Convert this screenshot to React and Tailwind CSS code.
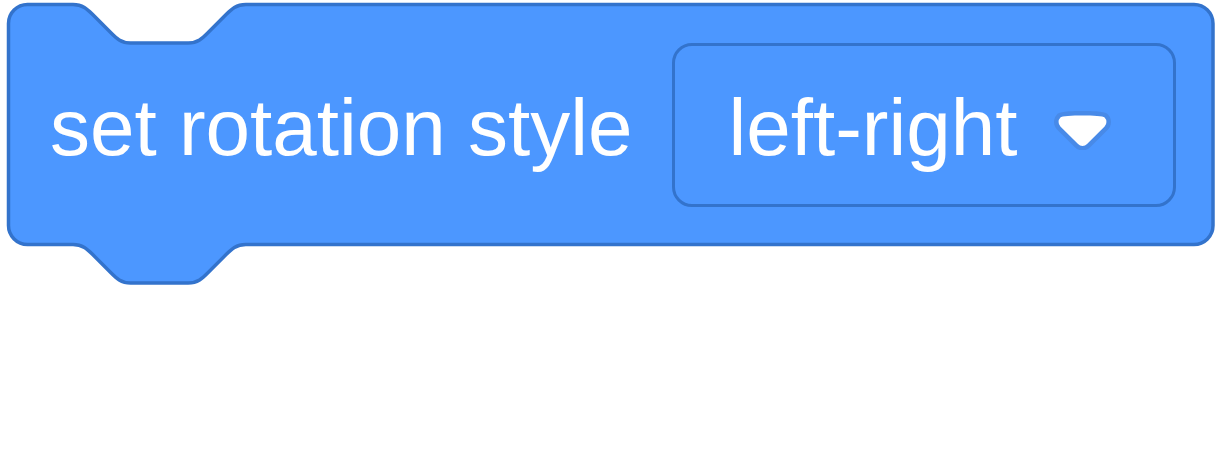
import React from "react";

const BLOCK_PATH =
  "M 8.5 23.5 A 19 19 0 0 1 27.5 4.5 H 73 " +
  "c 9.6 0 14.4 4.8 19.2 9.6 l 19.2 19.2 c 4.8 4.8 9.6 9.6 19.2 9.6 h 57.6 " +
  "c 9.6 0 14.4 -4.8 19.2 -9.6 l 19.2 -19.2 c 4.8 -4.8 9.6 -9.6 19.2 -9.6 " +
  "H 1194 A 19 19 0 0 1 1213 23.5 V 225.5 A 19 19 0 0 1 1194 244.5 H 245.8 " +
  "c -9.6 0 -14.4 4.8 -19.2 9.6 l -19.2 19.2 c -4.8 4.8 -9.6 9.6 -19.2 9.6 h -57.6 " +
  "c -9.6 0 -14.4 -4.8 -19.2 -9.6 l -19.2 -19.2 c -4.8 -4.8 -9.6 -9.6 -19.2 -9.6 " +
  "H 27.5 A 19 19 0 0 1 8.5 225.5 Z";

const DropdownArrow = () => (
  <svg width="57" height="39.4" viewBox="0 0 12.71 8.79">
    <path
      d="M12.71,2.44A2.41,2.41,0,0,1,12,4.16L8.08,8.08a2.45,2.45,0,0,1-3.45,0L0.72,4.16A2.42,2.42,0,0,1,0,2.44,2.48,2.48,0,0,1,.71.72C1,0.47,1.43,0,6.36,0S11.75,0.46,12,.71A2.44,2.44,0,0,1,12.71,2.44Z"
      fill="#231f20"
      opacity="0.1"
    />
    <path
      d="M6.36,7.79a1.43,1.43,0,0,1-1-.42L1.42,3.45a1.44,1.44,0,0,1,0-2c0.56-.56,9.31-0.56,9.87,0a1.44,1.44,0,0,1,0,2L7.37,7.37A1.43,1.43,0,0,1,6.36,7.79Z"
      fill="#fff"
    />
  </svg>
);

const App = () => {
  return (
    <div className="relative h-[470px] w-[1225px] overflow-hidden bg-white font-['Liberation_Sans',Arial,sans-serif] text-white">
      {/* Block shape */}
      <svg
        className="absolute left-0 top-0"
        width="1225"
        height="300"
        viewBox="0 0 1225 300"
      >
        <path d={BLOCK_PATH} fill="#4C97FF" stroke="#3373CC" strokeWidth="3.5" />
      </svg>

      {/* Block content */}
      <div className="relative flex h-[249px] items-center pl-[50px]">
        <span className="mt-[6px] text-[80px] leading-none">set rotation style</span>

        <div className="ml-[39px] flex h-[164px] w-[504px] items-center rounded-[20px] border-[3.5px] border-[#3373CC] pl-[54px]">
          <span className="mt-[6px] text-[80px] leading-none">left-right</span>
          <div className="ml-[37px] mt-[12px] flex items-center">
            <DropdownArrow />
          </div>
        </div>
      </div>
    </div>
  );
};

export default App;
